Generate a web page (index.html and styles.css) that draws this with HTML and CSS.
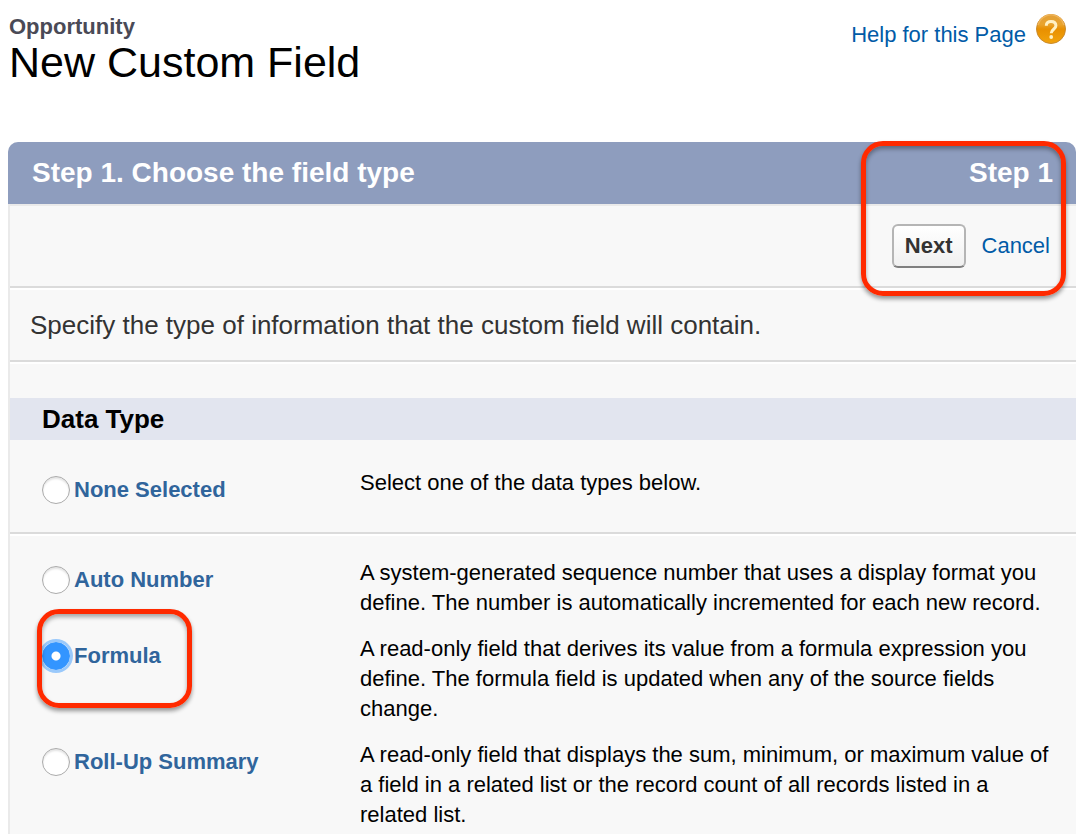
FILE: index.html
```html
<!DOCTYPE html>
<html lang="en">
<head>
<meta charset="utf-8">
<meta name="viewport" content="width=device-width, initial-scale=1">
<title>New Custom Field</title>
<link rel="stylesheet" href="styles.css">
</head>
<body>
<header class="page-header">
  <div class="heading">
    <p class="object-name">Opportunity</p>
    <h1 class="page-title">New Custom Field</h1>
  </div>
  <a class="help-link" href="#help">
    <span>Help for this Page</span>
    <svg class="help-icon" viewBox="0 0 30 30" aria-hidden="true">
      <defs>
        <linearGradient id="orb" x1="0" y1="0" x2="0" y2="1">
          <stop offset="0" stop-color="#e2a03a"/>
          <stop offset=".35" stop-color="#e9a32c"/>
          <stop offset=".5" stop-color="#e88f00"/>
          <stop offset="1" stop-color="#f2a40c"/>
        </linearGradient>
      </defs>
      <circle cx="15" cy="15" r="14.5" fill="url(#orb)" stroke="#c98a2e"/>
      <path d="M2 11a13.400 13.400 0 0 1 26 0" fill="none" stroke="#efb458" stroke-width="1.500"/>
      <path d="M10.300 11.800C10.300 8.600 12.200 7.600 15 7.600s4.900 1.400 4.900 4.200c0 3.400-4.700 3.600-4.700 7.400" fill="none" stroke="#fff1c4" stroke-width="3"/>
      <circle cx="15.200" cy="23" r="1.900" fill="#fff1c4"/>
    </svg>
  </a>
</header>

<main>
<form class="wizard">
  <div class="wizard-top">
    <div class="step-bar">
      <h2 class="step-text">Step 1. Choose the field type</h2>
      <span class="step-text">Step 1</span>
    </div>
    <div class="actions">
      <button class="next-button" type="button">Next</button>
      <a class="cancel-link" href="#cancel">Cancel</a>
    </div>
    <span class="highlight highlight-actions"></span>
  </div>

  <p class="intro">Specify the type of information that the custom field will contain.</p>

  <h3 class="section-title">Data Type</h3>

  <div class="options options-none">
    <div class="option">
      <div class="choice">
        <input class="radio" type="radio" name="type" id="type-none" aria-describedby="desc-none">
        <label for="type-none">None Selected</label>
      </div>
      <p class="description" id="desc-none">Select one of the data types below.</p>
    </div>
  </div>

  <div class="options">
    <div class="option">
      <div class="choice">
        <input class="radio" type="radio" name="type" id="type-auto" aria-describedby="desc-auto">
        <label for="type-auto">Auto Number</label>
      </div>
      <p class="description" id="desc-auto">A system-generated sequence number that uses a display format you define. The number is automatically incremented for each new record.</p>
    </div>
    <div class="option">
      <div class="choice">
        <input class="radio" type="radio" name="type" id="type-formula" aria-describedby="desc-formula" checked>
        <label for="type-formula">Formula</label>
      </div>
      <p class="description" id="desc-formula">A read-only field that derives its value from a formula expression you define. The formula field is updated when any of the source fields change.</p>
      <span class="highlight highlight-formula"></span>
    </div>
    <div class="option">
      <div class="choice">
        <input class="radio" type="radio" name="type" id="type-rollup" aria-describedby="desc-rollup">
        <label for="type-rollup">Roll-Up Summary</label>
      </div>
      <p class="description" id="desc-rollup">A read-only field that displays the sum, minimum, or maximum value of a field in a related list or the record count of all records listed in a related list.</p>
    </div>
  </div>
</form>
</main>
</body>
</html>
```
FILE: styles.css
```css
* {
  box-sizing: border-box;
}

body {
  margin: 0;
  background: #fff;
  color: #000;
  font: 22px/30px "Liberation Sans", Arial, sans-serif;
}

h1, h2, h3, p {
  margin: 0;
}

a {
  color: #015ba7;
  text-decoration: none;
}

.page-header {
  display: flex;
  justify-content: space-between;
  align-items: flex-start;
  padding: 14px 10px 58px 9px;
}

.object-name {
  color: #4a4a56;
  font-weight: bold;
  line-height: 26px;
}

.page-title {
  font-size: 43px;
  font-weight: normal;
  line-height: 44px;
}

.help-link {
  display: flex;
  gap: 10px;
}

.help-link span {
  padding-top: 6px;
}

.help-icon {
  width: 30px;
  height: 30px;
}

.wizard {
  margin-left: 8px;
  border-left: 2px solid #eaeaea;
  border-radius: 10px 10px 0 0;
  background: #f8f8f8;
}

.wizard-top {
  position: relative;
}

.step-bar {
  display: flex;
  justify-content: space-between;
  margin-left: -2px;
  padding: 15px 23px 15px 24px;
  border-bottom: 2px solid #eaeaea;
  border-radius: 10px 10px 0 0;
  background: #8e9dbe;
  background-clip: padding-box;
  color: #fff;
}

.step-text {
  font-size: 28px;
  font-weight: bold;
  line-height: 32px;
}

.actions {
  display: flex;
  justify-content: flex-end;
  align-items: center;
  gap: 16px;
  padding: 18px 26px;
  border-bottom: 2px solid #dbdbdb;
}

.next-button {
  height: 44px;
  padding: 0 11px;
  border: 2px solid #b5b5b5;
  border-bottom-color: #7f7f7f;
  border-radius: 6px;
  background: linear-gradient(#fff, #f0f0f0);
  color: #333;
  font: inherit;
  font-weight: bold;
}

.intro {
  padding: 19px 20px;
  border-top: 2px solid #fff;
  border-bottom: 2px solid #dbdbdb;
  color: #333;
  font-size: 26px;
  line-height: 32px;
}

.section-title {
  position: relative;
  margin-top: 36px;
  margin-bottom: 28px;
  padding: 5px 32px;
  background: #e2e5ef;
  font-size: 26px;
  line-height: 32px;
}

.section-title::before {
  content: "";
  position: absolute;
  top: -36px;
  left: 0;
  right: 0;
  height: 2px;
  background: #fff;
}

.options {
  display: grid;
  gap: 16px;
  padding: 22px 22px 4px 32px;
  border-top: 2px solid #fff;
}

.options-none {
  padding-top: 0;
  padding-bottom: 27px;
  border-top: 0;
  border-bottom: 2px solid #dbdbdb;
}

.option {
  position: relative;
  display: grid;
  grid-template-columns: 318px 1fr;
}

.choice {
  display: flex;
  align-items: center;
  align-self: start;
  gap: 4px;
  padding-top: 7px;
  color: #30659c;
  font-weight: bold;
}

.radio {
  appearance: none;
  width: 28px;
  height: 28px;
  margin: 0;
  border: 1px solid #ababab;
  border-radius: 50%;
  background: #fff;
  box-shadow: inset 0 2px 2px #e4e4e4;
}

.radio:checked {
  border-color: #3395ff;
  background: radial-gradient(circle, #fff 4px, #3395ff 5px);
  box-shadow: 0 0 0 3px #9ac9fb;
}

.highlight {
  position: absolute;
  border: 5px solid #ff2a00;
  border-radius: 22px;
  box-shadow: 0 3px 4px #00000066, inset 0 3px 4px #00000055;
  pointer-events: none;
}

.highlight-actions {
  top: -1px;
  right: 10px;
  bottom: -8px;
  width: 205px;
}

.highlight-formula {
  top: -25px;
  left: -5px;
  width: 155px;
  height: 99px;
}
```
